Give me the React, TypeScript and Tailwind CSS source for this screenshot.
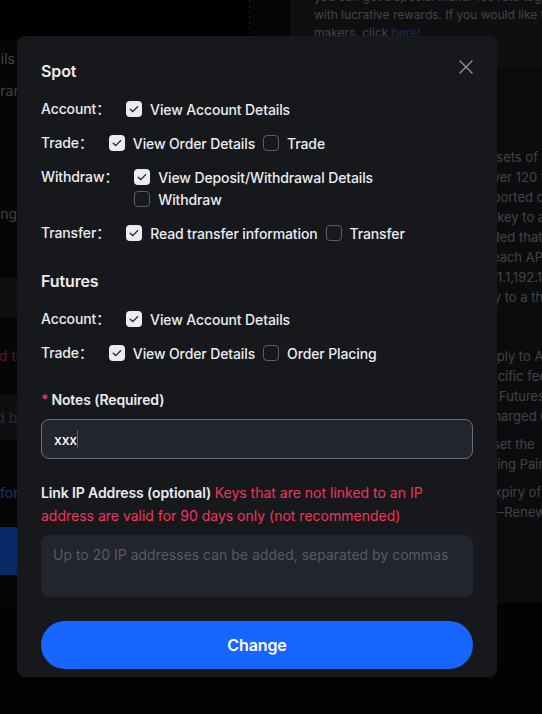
import type { ReactNode } from 'react'

const sans = "font-['Inter','Noto_Sans_CJK_SC',sans-serif]"

function Box({ checked }: { checked?: boolean }) {
  if (!checked) {
    return <span className="h-4 w-4 shrink-0 rounded-[4px] border border-[#5b5e66]" />
  }
  return (
    <span className="flex h-4 w-4 shrink-0 items-center justify-center rounded-[4px] bg-[#eaecef]">
      <svg viewBox="0 0 16 16" className="h-4 w-4">
        <path
          d="M4.3 8.2l2.4 2.4 5-5"
          fill="none"
          stroke="#17181c"
          strokeWidth="1.3"
          strokeLinecap="round"
          strokeLinejoin="round"
        />
      </svg>
    </span>
  )
}

function Option({ checked, children }: { checked?: boolean; children: ReactNode }) {
  return (
    <label className="flex h-[22px] items-center gap-2 whitespace-nowrap">
      <Box checked={checked} />
      <span>{children}</span>
    </label>
  )
}

function PermRow({ label, className, stacked, children }: { label: string; className?: string; stacked?: boolean; children: ReactNode }) {
  return (
    <div className={`flex items-start ${className ?? ''}`}>
      <span className="mr-4 whitespace-nowrap leading-[22px]">{label}：</span>
      <div className={stacked ? 'flex flex-col' : 'flex items-center gap-2'}>{children}</div>
    </div>
  )
}

// only the tail of these lines peeks out on the left of the dialog
function Tail({ children, className }: { children: ReactNode; className?: string }) {
  return (
    <div className={`flex h-5 items-center justify-end whitespace-nowrap ${className ?? ''}`}>{children}</div>
  )
}

const notes = [
  'Each user can make up to 30 sets of API Keys.',
  '2. Any API Key can support over 120 trading pairs',
  'including those currently supported on the platform.',
  '3. Do not ever share your API key to anyone.',
  'Also, it is strongly recommended that you link',
  'the IP address or IP range to each API Key.',
  'Split by commas, e.g. 192.168.1.1,192.168.1.2',
  '4. Never disclose your API key to a third party.',
]

const fees = [
  '5. Standard trade fee rates apply to API trading.',
  'Some accounts may have specific fee rates,',
  'including VIP levels. Spot and Futures fees',
  'for all the API orders will be charged 0.02%.',
]

function BackgroundPage() {
  return (
    <div className={`flex h-full flex-col ${sans} text-[#a3a6b0]`}>
      <div className="flex h-[603px]">
        <div className="flex w-[290px] shrink-0 flex-col bg-[#0e0e10] text-[14px]">
          <div className="h-[40px] w-[250px] shrink-0 border-r border-dashed border-[#4a4a4f] bg-black" />
          <Tail className="mt-2 w-[15px]">View Account Details</Tail>
          <div className="-ml-2 mt-3 flex h-5 items-center whitespace-nowrap">Transfer information</div>
          <Tail className="mt-[103px] w-[17px]">Order Placing</Tail>
          <div className="mt-[55px] h-10 bg-[#232328]" />
          <Tail className="mt-[27px] w-[24px] text-[#e0324b]">Keys not linked to</Tail>
          <div className="mt-[30px] flex h-[45px] items-center bg-[#232328]">
            <Tail className="w-[25px] text-[#6f727b]">Separated by</Tail>
          </div>
          <div className="mt-[42px] flex h-5 items-center whitespace-nowrap text-[#4a86f0]">for more details</div>
          <div className="mt-[25px] h-12 bg-[#1766ff]" />
        </div>
        <div className="flex min-w-0 flex-1 flex-col bg-[#1e1e23]">
          <div className="h-[68px] overflow-hidden bg-[#26262d] pl-6 text-[12px] leading-[18px]">
            <p className="-mt-[12px] whitespace-nowrap">you can get a special maker fee rate together</p>
            <p className="whitespace-nowrap">with lucrative rewards. If you would like to become</p>
            <p className="whitespace-nowrap">
              makers, click <span className="text-[#3f74d6]">here!</span>
            </p>
          </div>
          <div className="overflow-hidden pl-6 pt-[79px] text-[13px] leading-5">
            {notes.map((line) => (
              <p key={line} className="whitespace-nowrap">{line}</p>
            ))}
            <div className="mt-[39px]">
              {fees.map((line) => (
                <p key={line} className="whitespace-nowrap">{line}</p>
              ))}
            </div>
            <p className="mt-2 whitespace-nowrap">6. For each API Key, you can set the</p>
            <p className="whitespace-nowrap">permissions and allowed Trading Pairs.</p>
            <p className="mt-2 whitespace-nowrap">An e-mail is sent before the expiry of your API keys.</p>
            <p className="whitespace-nowrap">keys. Go to API Management—Renew</p>
          </div>
        </div>
      </div>
      <div className="flex-1 bg-[#080808]" />
    </div>
  )
}

export default function App() {
  return (
    <div className="relative h-[714px] w-[542px] overflow-hidden bg-[#1c1c21]">
      <BackgroundPage />
      <div className="absolute inset-0 bg-black/60" />

      <div className={`absolute left-[17px] top-[36px] w-[480px] rounded-lg bg-[#17181c] px-6 pb-2 pt-[23px] ${sans} text-[14px] font-medium tracking-[-0.12px] text-[#eaecef]`}>
        <button className="absolute right-6 top-6 text-[#8d929c]" aria-label="Close">
          <svg viewBox="0 0 14 14" className="h-[14px] w-[14px]">
            <path d="M1 1l12 12M13 1L1 13" stroke="currentColor" strokeWidth="1.4" strokeLinecap="round" />
          </svg>
        </button>

        <h3 className="text-[16px] font-semibold leading-6">Spot</h3>
        <PermRow label="Account" className="mt-[15px]">
          <Option checked>View Account Details</Option>
        </PermRow>
        <PermRow label="Trade" className="mt-3">
          <Option checked>View Order Details</Option>
          <Option>Trade</Option>
        </PermRow>
        <PermRow label="Withdraw" className="mt-3" stacked>
          <Option checked>View Deposit/Withdrawal Details</Option>
          <Option>Withdraw</Option>
        </PermRow>
        <PermRow label="Transfer" className="mt-3">
          <Option checked>Read transfer information</Option>
          <Option>Transfer</Option>
        </PermRow>

        <h3 className="mt-[25px] text-[16px] font-semibold leading-6">Futures</h3>
        <PermRow label="Account" className="mt-[15px]">
          <Option checked>View Account Details</Option>
        </PermRow>
        <PermRow label="Trade" className="mt-3">
          <Option checked>View Order Details</Option>
          <Option>Order Placing</Option>
        </PermRow>

        <div className="mt-[25px] flex items-center font-semibold leading-[22px]">
          <span className="mr-[3px] text-[#f0345a]">*</span>
          Notes (Required)
        </div>
        <div className="mt-2 flex h-10 items-center rounded-lg border border-[#6a6e77] bg-[#22252d] px-3">
          <span className="text-white">xxx</span>
          <span className="h-[18px] w-px bg-[#1766ff]" />
        </div>

        <p className="mt-[22px] leading-[23px]">
          <span className="font-semibold">Link IP Address (optional)</span>{' '}
          <span className="font-normal tracking-normal text-[#f0345a]">
            Keys that are not linked to an IP address are valid for 90 days only (not recommended)
          </span>
        </p>
        <div className="mt-2 h-[62px] rounded-lg bg-[#22252d] px-3 pt-[9px] font-normal leading-[22px] tracking-normal text-[#575b64]">
          Up to 20 IP addresses can be added, separated by commas
        </div>

        <button className="mt-6 flex h-12 w-full items-center justify-center rounded-full bg-[#1766ff] text-[16px] font-semibold text-white">
          Change
        </button>
      </div>
    </div>
  )
}
